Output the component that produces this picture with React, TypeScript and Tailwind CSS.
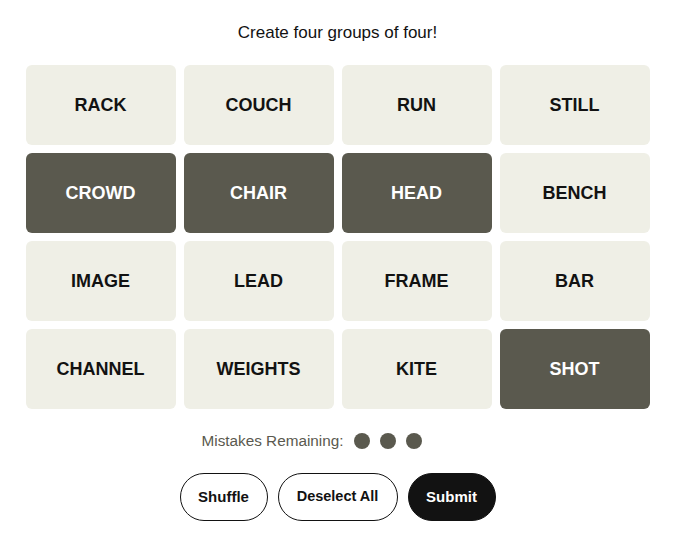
import { useState } from "react";

type Tile = { word: string; selected: boolean };

const initialTiles: Tile[] = [
  { word: "RACK", selected: false },
  { word: "COUCH", selected: false },
  { word: "RUN", selected: false },
  { word: "STILL", selected: false },
  { word: "CROWD", selected: true },
  { word: "CHAIR", selected: true },
  { word: "HEAD", selected: true },
  { word: "BENCH", selected: false },
  { word: "IMAGE", selected: false },
  { word: "LEAD", selected: false },
  { word: "FRAME", selected: false },
  { word: "BAR", selected: false },
  { word: "CHANNEL", selected: false },
  { word: "WEIGHTS", selected: false },
  { word: "KITE", selected: false },
  { word: "SHOT", selected: true },
];

export default function App() {
  const [tiles, setTiles] = useState<Tile[]>(initialTiles);

  const toggle = (i: number) => {
    setTiles((prev) =>
      prev.map((t, idx) => (idx === i ? { ...t, selected: !t.selected } : t))
    );
  };

  return (
    <div
      className="min-h-screen bg-white flex flex-col items-center pt-[21px] text-[#121212]"
      style={{ fontFamily: '"Liberation Sans", Arial, sans-serif' }}
    >
      <p className="text-[17px] leading-[24px]">Create four groups of four!</p>

      <div className="grid grid-cols-4 gap-2 mt-[20px] w-[624px]">
        {tiles.map((t, i) => (
          <button
            key={t.word}
            onClick={() => toggle(i)}
            className={
              t.selected
                ? "h-20 rounded-md bg-[#5a594e] text-white text-[18px] font-bold"
                : "h-20 rounded-md bg-[#efefe6] text-[#121212] text-[18px] font-bold"
            }
          >
            {t.word}
          </button>
        ))}
      </div>

      {/* 4th slot is the lost mistake, kept invisible so the row stays put */}
      <div className="flex items-center mt-[22px] h-5 pr-[25px]">
        <span className="text-[15.3px] text-[#5a594e] mr-[11px]">Mistakes Remaining:</span>
        <div className="flex gap-[10px]">
          <span className="w-4 h-4 rounded-full bg-[#5a594e]" />
          <span className="w-4 h-4 rounded-full bg-[#5a594e]" />
          <span className="w-4 h-4 rounded-full bg-[#5a594e]" />
          <span className="w-4 h-4 rounded-full invisible" />
        </div>
      </div>

      <div className="flex gap-[10px] mt-[22px]">
        <button className="h-12 w-[88px] rounded-full border border-[#121212] bg-white text-[15px] font-bold">
          Shuffle
        </button>
        <button className="h-12 w-[120px] rounded-full border border-[#121212] bg-white text-[14.5px] font-bold">
          Deselect All
        </button>
        <button className="h-12 w-[88px] rounded-full border border-[#121212] bg-[#121212] text-white text-[15px] font-bold">
          Submit
        </button>
      </div>
    </div>
  );
}
